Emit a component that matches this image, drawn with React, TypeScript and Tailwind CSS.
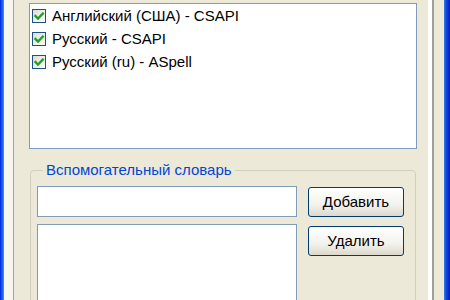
import React from "react";

function CheckBox() {
  return (
    <span className="flex h-[14px] w-[14px] shrink-0 items-center justify-center border border-[#1c5180] bg-[linear-gradient(135deg,#dcdcd7,#ffffff)]">
      <svg width="12" height="12" viewBox="0 0 12 12">
        <path d="M2.5 6 L5 8.6 L9.8 3.6" fill="none" stroke="#21a121" strokeWidth="2.4" strokeLinecap="square" />
      </svg>
    </span>
  );
}

function Row({ label }: { label: string }) {
  return (
    <div className="flex h-[23px] items-center gap-[6px] pl-[2px]">
      <CheckBox />
      <span className="leading-none">{label}</span>
    </div>
  );
}

function XpButton({ label }: { label: string }) {
  return (
    <div className="flex h-[30px] w-[96px] shrink-0 items-center justify-center rounded-[3px] border border-[#003c74] bg-[linear-gradient(to_bottom,#ffffff,#f3f2ec_60%,#dcd8cc)] text-black">
      {label}
    </div>
  );
}

export default function App() {
  return (
    <div
      className="flex h-[300px] w-[450px] overflow-hidden bg-[#ece9d8] text-[15px] text-black"
      style={{ fontFamily: '"Liberation Sans", Arial, sans-serif' }}
    >
      {/* left window frame */}
      <div className="w-[4px] shrink-0 bg-[linear-gradient(to_right,#0019cf,#0850e8,#1a66f0,#5a92f5)]" />
      <div className="w-[9px] shrink-0 bg-[#f6f5ef]" />
      <div className="w-[1px] shrink-0 bg-[#a9a79c]" />

      {/* content */}
      <div className="flex w-[414px] shrink-0 flex-col pl-[15px] pr-[11px] pt-[3px]">
        <div className="h-[146px] shrink-0 border border-[#7f9db9] bg-white">
          <Row label="Английский (США) - CSAPI" />
          <Row label="Русский - CSAPI" />
          <Row label="Русский (ru) - ASpell" />
        </div>

        <fieldset className="ml-[1px] mr-[1px] mt-[12px] min-h-[200px] shrink-0 rounded-[4px] border border-[#d0d0bf] px-[6px] pb-[6px] pt-[7px]">
          <legend className="ml-[6px] px-[3px] leading-[18px] text-[#0046d5]">Вспомогательный словарь</legend>
          <div className="flex gap-[11px]">
            <div className="flex w-[260px] flex-col gap-[7px]">
              <div className="h-[31px] shrink-0 border border-[#7f9db9] bg-white" />
              <div className="h-[120px] shrink-0 border border-[#7f9db9] bg-white" />
            </div>
            <div className="flex flex-col gap-[9px] pt-[1px]">
              <XpButton label="Добавить" />
              <XpButton label="Удалить" />
            </div>
          </div>
        </fieldset>
      </div>

      {/* right side borders */}
      <div className="w-[4px] shrink-0 bg-white" />
      <div className="w-[2px] shrink-0 bg-[#a0a09a]" />
      <div className="w-[10px] shrink-0 bg-[#ece9d8]" />
      <div className="w-[6px] shrink-0 bg-[linear-gradient(to_right,#3b7ef0,#0a4fe0,#0831d9,#001ea8)]" />
    </div>
  );
}
